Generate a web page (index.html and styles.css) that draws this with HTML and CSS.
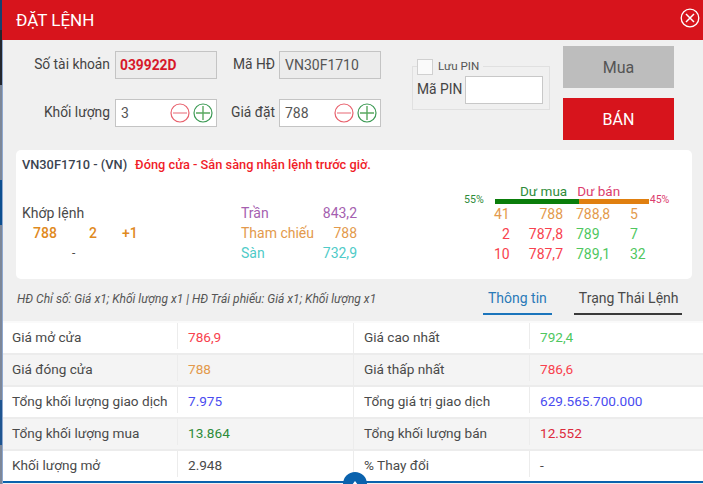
FILE: index.html
```html
<!DOCTYPE html>
<html lang="vi">
<head>
  <meta charset="UTF-8">
  <meta name="viewport" content="width=device-width, initial-scale=1.0">
  <title>Đặt lệnh</title>
  <link rel="stylesheet" href="styles.css">
</head>
<body>
  <div class="modal">
    <header class="modal-head">
      <h1>ĐẶT LỆNH</h1>
      <button class="close-btn" aria-label="Đóng">
        <svg width="20" height="20" viewBox="0 0 20 20" fill="none" stroke="#fff">
          <circle cx="10" cy="10" r="8.8" stroke-width="1.3"/>
          <path d="M6 6l8 8M14 6l-8 8" stroke-width="1.5"/>
        </svg>
      </button>
    </header>

    <section class="order-form">
      <div class="fields">
        <label class="lbl lbl-a">Số tài khoản</label>
        <div class="box box-ro account">039922D</div>
        <label class="lbl lbl-b">Mã HĐ</label>
        <div class="box box-ro">VN30F1710</div>
        <label class="lbl lbl-a">Khối lượng</label>
        <div class="box">
          <span>3</span>
          <span class="steppers">
            <svg class="stepper" viewBox="0 0 20 20" fill="none"><circle cx="10" cy="10" r="9" stroke="#e8606c" stroke-width="1.2"/><path d="M3 10h14" stroke="#f0a0a8" stroke-width="1.6"/></svg>
            <svg class="stepper" viewBox="0 0 20 20" fill="none"><circle cx="10" cy="10" r="9" stroke="#3c9a54" stroke-width="1.2"/><path d="M3 10h14M10 3v14" stroke="#5aa860" stroke-width="1.4"/></svg>
          </span>
        </div>
        <label class="lbl lbl-b">Giá đặt</label>
        <div class="box">
          <span>788</span>
          <span class="steppers">
            <svg class="stepper" viewBox="0 0 20 20" fill="none"><circle cx="10" cy="10" r="9" stroke="#e8606c" stroke-width="1.2"/><path d="M3 10h14" stroke="#f0a0a8" stroke-width="1.6"/></svg>
            <svg class="stepper" viewBox="0 0 20 20" fill="none"><circle cx="10" cy="10" r="9" stroke="#3c9a54" stroke-width="1.2"/><path d="M3 10h14M10 3v14" stroke="#5aa860" stroke-width="1.4"/></svg>
          </span>
        </div>
      </div>

      <fieldset class="pin">
        <legend><span class="check"></span>Lưu PIN</legend>
        <label>Mã PIN</label>
        <div class="pin-input"></div>
      </fieldset>

      <div class="actions">
        <button class="btn btn-buy">Mua</button>
        <button class="btn btn-sell">BÁN</button>
      </div>
    </section>

    <section class="quote">
      <div class="quote-title"><b>VN30F1710 - (VN)</b><span class="status">Đóng cửa - Sắn sàng nhận lệnh trước giờ.</span></div>
      <div class="quote-body">
        <div class="match">
          <div>Khớp lệnh</div>
          <div class="match-row"><span>788</span><span>2</span><span>+1</span></div>
          <div class="match-dash">-</div>
        </div>
        <div class="limits">
          <span class="purple">Trần</span><span class="purple num">843,2</span>
          <span class="orange">Tham chiếu</span><span class="orange num">788</span>
          <span class="cyan">Sàn</span><span class="cyan num">732,9</span>
        </div>
        <div class="book">
          <div class="book-head"><span class="green-d">Dư mua</span><span class="pink">Dư bán</span></div>
          <div class="ratio">
            <span class="pct green-d">55%</span>
            <div class="bar"><i class="bar-buy" style="width:55%"></i><i class="bar-sell" style="width:45%"></i></div>
            <span class="pct pink">45%</span>
          </div>
          <div class="book-row"><span class="orange q">41</span><span class="orange p">788</span><span class="orange s">788,8</span><span class="orange">5</span></div>
          <div class="book-row"><span class="red q q2">2</span><span class="red p">787,8</span><span class="green s">789</span><span class="green">7</span></div>
          <div class="book-row"><span class="red q">10</span><span class="red p">787,7</span><span class="green s">789,1</span><span class="green">32</span></div>
        </div>
      </div>
    </section>

    <div class="tab-line">
      <p class="note">HĐ Chỉ số: Giá x1; Khối lượng x1 | HĐ Trái phiếu: Giá x1; Khối lượng x1</p>
      <a class="tab tab-on">Thông tin</a>
      <a class="tab">Trạng Thái Lệnh</a>
    </div>

    <div class="info">
      <div class="info-row">
        <div>Giá mở cửa</div><div class="red">786,9</div>
        <div>Giá cao nhất</div><div class="green">792,4</div>
      </div>
      <div class="info-row">
        <div>Giá đóng cửa</div><div class="orange">788</div>
        <div>Giá thấp nhất</div><div class="red">786,6</div>
      </div>
      <div class="info-row">
        <div>Tổng khối lượng giao dịch</div><div class="blue">7.975</div>
        <div>Tổng giá trị giao dịch</div><div class="blue">629.565.700.000</div>
      </div>
      <div class="info-row">
        <div>Tổng khối lượng mua</div><div class="green-d">13.864</div>
        <div>Tổng khối lượng bán</div><div class="red-d">12.552</div>
      </div>
      <div class="info-row">
        <div>Khối lượng mở</div><div>2.948</div>
        <div>% Thay đổi</div><div>-</div>
      </div>
    </div>

    <button class="fold-btn" aria-label="Thu gọn">
      <svg width="6" height="4" viewBox="0 0 6 4"><path d="M3 0l3 4H0z" fill="#fff"/></svg>
    </button>
  </div>
</body>
</html>
```

FILE: styles.css
```css
html, body {
  margin: 0;
  padding: 0;
  height: 484px;
  overflow: hidden;
}
/* the page behind the dialog, only a sliver of it shows on the left */
body {
  background: linear-gradient(to bottom,
    #17406e 0, #17406e 30px,
    #23262e 30px, #23262e 85px,
    #7d8798 85px, #7d8798 180px,
    #0d4f8f 180px, #0d4f8f 225px,
    #7d8798 225px, #7d8798 400px,
    #1f5590 400px, #1f5590 445px,
    #7d8798 445px);
  font-family: Roboto, "Noto Sans", sans-serif;
  font-size: 14px;
  color: #4a4a4a;
}
.modal {
  position: relative;
  margin-left: 2px;
  height: 484px;
  background: #f0f0f0;
  overflow: hidden;
}
.modal::before {
  content: "";
  position: absolute;
  left: 0;
  top: 40px;
  bottom: 0;
  width: 1px;
  background: #8fa9d0;
}

/* header */
.modal-head {
  height: 40px;
  background: #d7141c;
  display: flex;
  justify-content: space-between;
  align-items: center;
  padding: 0 3px 0 14px;
}
.modal-head h1 {
  margin: 0;
  font-size: 17px;
  font-weight: 400;
  color: #fff;
}
.close-btn {
  background: none;
  border: none;
  padding: 0;
  margin-top: -4px;
  height: 20px;
  cursor: pointer;
}

/* order form */
.order-form {
  height: 110px;
  display: flex;
}
.fields {
  display: grid;
  grid-template-columns: 113px 102px 62px 102px;
  grid-template-rows: 28px 28px;
  row-gap: 20px;
  padding-top: 11px;
  align-items: center;
}
.lbl {
  text-align: right;
  padding-right: 5px;
  color: #444;
  margin-top: -2px;
  font-size: 13.8px;
}
.lbl-b {
  padding-right: 4px;
}
.box {
  height: 28px;
  box-sizing: border-box;
  border: 1px solid #c4c4c4;
  background: #fff;
  padding: 0 0 0 5px;
  display: flex;
  align-items: center;
  justify-content: space-between;
  color: #555;
}
.box-ro {
  background: #ececec;
}
.account {
  color: #d7182a;
  font-weight: 700;
  font-size: 13.8px;
  padding-left: 4px;
}
.steppers {
  display: flex;
  gap: 3px;
  padding-right: 3px;
}
.stepper {
  width: 20px;
  height: 20px;
}
.pin {
  box-sizing: border-box;
  width: 138px;
  height: 52px;
  margin: 18px 0 0 31px;
  padding: 0 0 0 4px;
  border: 1px solid #e0e0e0;
  display: flex;
  align-items: flex-start;
  gap: 3px;
}
.pin legend {
  padding: 0 4px 0 0;
  margin-left: 0;
  font-size: 11.6px;
  color: #555;
  display: flex;
  align-items: center;
  gap: 5px;
  height: 16px;
  line-height: 16px;
}
.check {
  width: 14px;
  height: 14px;
  border: 1px solid #d0d0d0;
  background: #fafafa;
  margin-top: 1px;
}
.pin label {
  margin-top: 7px;
  color: #444;
  font-size: 13.8px;
}
.pin-input {
  width: 78px;
  height: 28px;
  box-sizing: border-box;
  border: 1px solid #c8c8c8;
  background: #fff;
  margin-top: 2px;
}
.actions {
  margin: 6px 0 0 13px;
  display: flex;
  flex-direction: column;
  gap: 10px;
}
.btn {
  width: 111px;
  height: 42px;
  border: none;
  font-family: inherit;
  font-size: 16px;
  cursor: pointer;
}
.btn-buy {
  background: #bdbdbd;
  color: #555;
}
.btn-sell {
  background: #d7141c;
  color: #fff;
}

/* quote panel */
.quote {
  margin-left: 14px;
  width: 676px;
  height: 129px;
  box-sizing: border-box;
  background: #fff;
  border-radius: 5px;
  padding: 7px 0 0 6px;
}
.quote-title {
  font-size: 12.8px;
  line-height: 15px;
  color: #3a4350;
}
.quote-title b {
  font-weight: 500;
}
.status {
  color: #f01c28;
  font-weight: 500;
  margin-left: 8px;
}
.quote-body {
  display: flex;
  font-size: 14px;
  line-height: 20px;
}
.match {
  width: 219px;
  margin-top: 31px;
}
.match-row {
  display: grid;
  grid-template-columns: 56px 33px auto;
  padding-left: 11px;
  color: #e08a1e;
  font-weight: 500;
}
.match-dash {
  padding-left: 50px;
  font-size: 12px;
}
.limits {
  width: 116px;
  margin-top: 31px;
  display: grid;
  grid-template-columns: 1fr auto;
  align-content: start;
  height: 60px;
}
.num {
  text-align: right;
}
.book {
  margin: 11px 0 0 3px;
  font-size: 14px;
}
.book-head {
  display: flex;
  gap: 10px;
  padding-left: 160px;
  height: 16px;
  line-height: 16px;
  font-size: 13.5px;
}
.ratio {
  display: flex;
  align-items: center;
  height: 5px;
  margin-left: 104px;
  gap: 11px;
}
.pct {
  font-size: 10.6px;
  line-height: 10px;
  margin-top: -3px;
}
.bar {
  display: flex;
  width: 154px;
  height: 5px;
  margin: 0 -10px 0 0;
}
.bar i {
  display: block;
  height: 5px;
}
.bar-buy {
  background: #0a7d0a;
}
.bar-sell {
  background: #e07f10;
}
.book-row {
  display: grid;
  grid-template-columns: 15px 54px 67px auto;
  padding-left: 134px;
  height: 20px;
}
.book-row .p {
  text-align: right;
}
.book-row .s {
  padding-left: 13px;
}
.book-row .q {
  white-space: nowrap;
}
.book-row .q2 {
  padding-left: 8px;
}

/* colour helpers */
.purple { color: #a55fb0; }
.orange { color: #e39a4c; }
.cyan { color: #4fcbc8; }
.red { color: #f8424e; }
.red-d { color: #dc2a3c; }
.green { color: #4fc75f; }
.green-d { color: #2e8b3a; }
.pink { color: #dc3c6e; }
.blue { color: #4a4cf0; }

/* note and tabs */
.tab-line {
  display: flex;
  align-items: flex-start;
  height: 42px;
}
.note {
  margin: 13px 0 0 15px;
  width: 466px;
  font-size: 12px;
  font-style: italic;
  color: #555;
  white-space: nowrap;
}
.tab {
  font-size: 14px;
  line-height: 17px;
  padding: 11px 3px 6px 5px;
  border-bottom: 2px solid #3a3a3a;
  color: #4a4a4a;
  margin: 0 0 0 22px;
  white-space: nowrap;
}
.tab-on {
  color: #2a7ab8;
  border-bottom-color: #1b75bc;
  margin-left: 0;
  padding-right: 5px;
}

/* info table */
.info {
  background: #fff;
  border-top: 2px solid #fafafa;
  border-bottom: 2px solid #0a62ad;
}
.info-row {
  display: grid;
  grid-template-columns: 176px 176px 176px 1fr;
  height: 32px;
  box-sizing: border-box;
  border-bottom: 2px solid #ececec;
  align-items: start;
  font-size: 13.6px;
  color: #4a4a4a;
  line-height: 28px;
}
.info-row:nth-child(even) {
  background: #f4f4f4;
}
.info-row:last-child {
  border-bottom: none;
  height: 30px;
}
.info-row > div {
  height: 26px;
  padding-left: 10px;
  border-right: 1px solid #ececec;
  white-space: nowrap;
}
.info-row > div:nth-child(2) {
  height: 30px;
}
.info-row > div:last-child {
  border-right: none;
}
.fold-btn {
  position: absolute;
  left: 341px;
  top: 472px;
  width: 24px;
  height: 24px;
  padding: 9px 0 0;
  border: none;
  border-radius: 50%;
  background: #0a62ad;
  display: flex;
  justify-content: center;
  align-items: flex-start;
}
```
